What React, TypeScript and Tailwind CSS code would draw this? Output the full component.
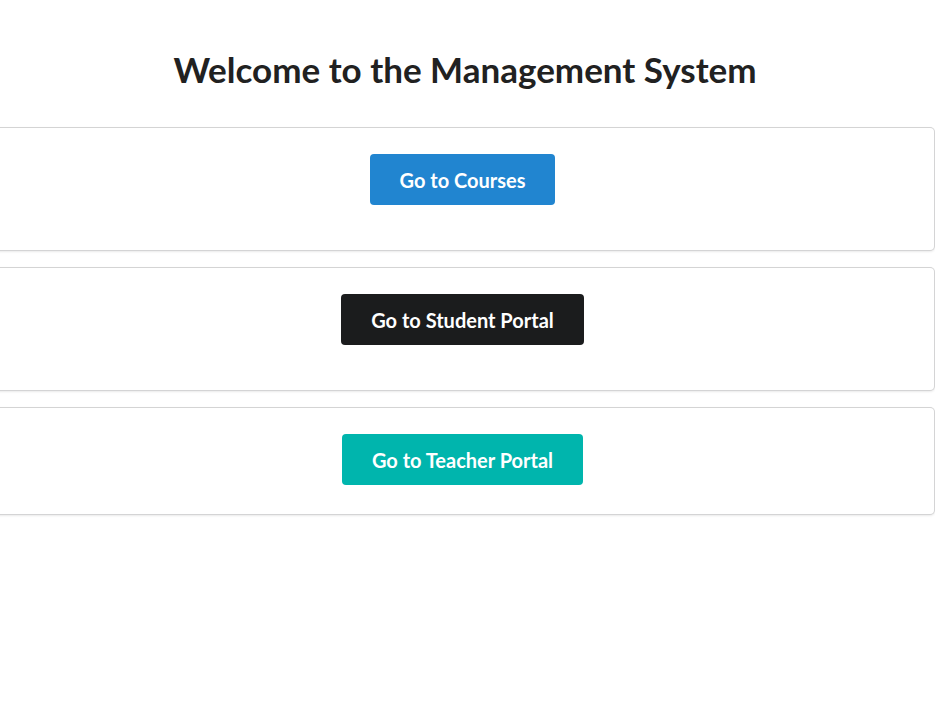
import React from "react";

const font = { fontFamily: "Lato, 'Open Sans', Arial, sans-serif" };

function Card({ label, color, extra }: { label: string; color: string; extra: boolean }) {
  return (
    <div className="rounded-[4px] bg-white shadow-[0_1px_3px_0_#d4d4d5,0_0_0_1px_#d4d4d5] pt-[26px] flex flex-col items-center">
      <button className={`${color} text-white font-bold text-[20px] leading-[20px] h-[51px] px-[30px] rounded-[4px]`}>
        {label}
      </button>
      <div className={extra ? "h-[45px]" : "h-[29px]"} />
    </div>
  );
}

export default function App() {
  return (
    <div className="min-h-[708px] bg-white overflow-hidden" style={font}>
      <h1 className="text-center text-[35px] font-bold text-[#212121] leading-none pt-[52px] pb-[41px] pr-[5px]">
        Welcome to the Management System
      </h1>
      <div className="ml-[-9px] w-[943px] flex flex-col gap-[18px]">
        <Card label="Go to Courses" color="bg-[#2185d0]" extra={true} />
        <Card label="Go to Student Portal" color="bg-[#1b1c1d]" extra={true} />
        <Card label="Go to Teacher Portal" color="bg-[#00b5ad]" extra={false} />
      </div>
    </div>
  );
}
